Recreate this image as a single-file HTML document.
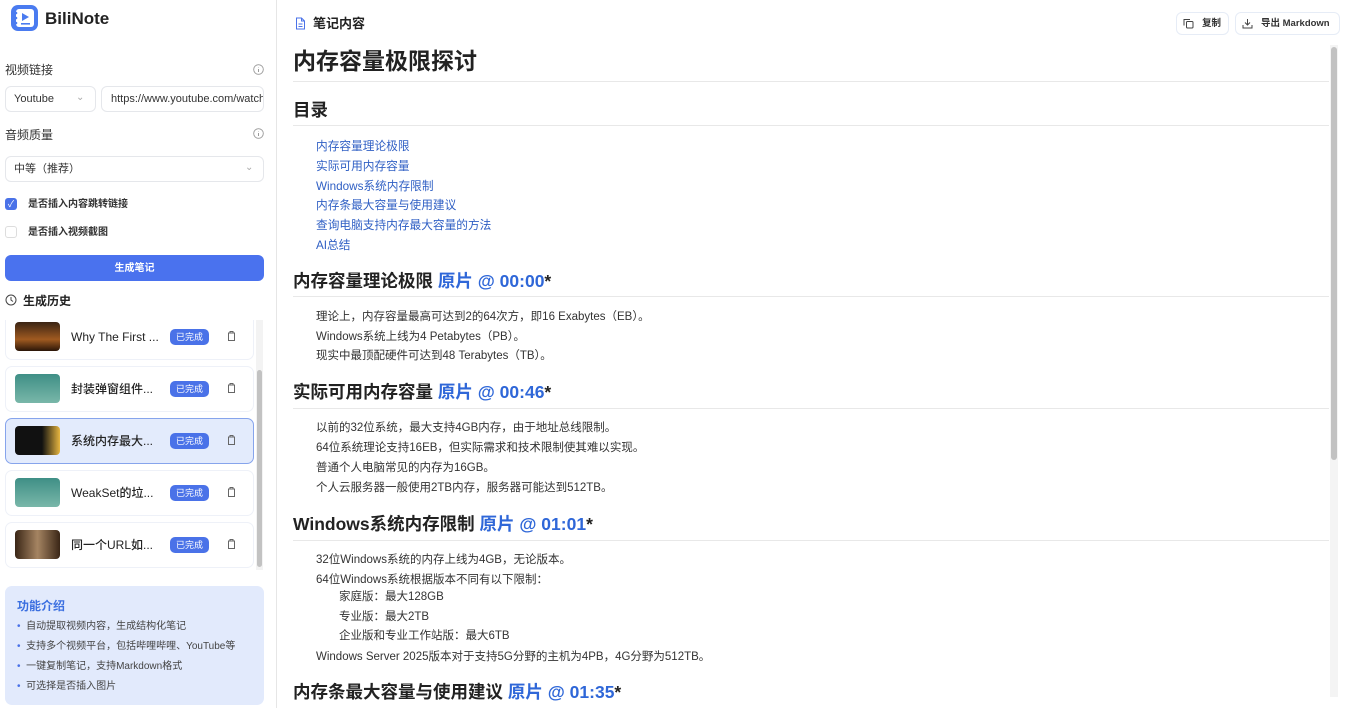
<!DOCTYPE html>
<html><head><meta charset="utf-8"><style>
*{margin:0;padding:0;box-sizing:border-box}
body{width:1351px;height:708px;overflow:hidden;background:#fff;font-family:"Liberation Sans","Noto Sans CJK SC",sans-serif;color:#222;position:relative}
.a{position:absolute;white-space:nowrap;line-height:1}
.box{position:absolute;border:1px solid #e5e7eb;border-radius:6px;background:#fff}
.hl{position:absolute;left:293px;width:1036px;height:1px;background:#e8e8e8}
.p{position:absolute;left:316px;font-size:11.5px;color:#333;white-space:nowrap;line-height:1}
.lk{position:absolute;left:316px;font-size:11.7px;color:#2f5fc4;white-space:nowrap;line-height:1}
.h2{position:absolute;left:293px;font-size:17.5px;font-weight:bold;color:#222;white-space:nowrap;line-height:1}
.h2 span{color:#2f67d8}
.item{position:absolute;left:5px;width:249px;height:46px;border:1px solid #eef1f8;border-radius:7px;background:#fff}
.item .th{position:absolute;left:9px;top:7px;width:45px;height:29px;border-radius:4px}
.item .nm{position:absolute;left:65px;top:16px;font-size:12px;font-weight:500;color:#222;white-space:nowrap;line-height:1}
.item .bd{position:absolute;left:164px;top:14px;width:39px;height:16px;border-radius:5px;background:#4a72e8;color:#fff;font-size:9px;text-align:center;line-height:16px}
.item svg{position:absolute;left:220px;top:15px}
</style></head><body>
<div style="position:absolute;left:276px;top:0;width:1px;height:708px;background:#e6e6e6"></div>
<svg style="position:absolute;left:10px;top:4px" width="29" height="28" viewBox="0 0 29 28"><rect x="1" y="1" width="27" height="26" rx="7" fill="#4a7bf0"/><rect x="6" y="5" width="18" height="18" rx="3" fill="#fff"/><path d="M12 9 L19 13 L12 17Z" fill="#4a7bf0"/><rect x="11" y="19" width="9" height="1.6" fill="#4a7bf0"/><circle cx="6" cy="9" r="1.3" fill="#4a7bf0"/><circle cx="6" cy="14" r="1.3" fill="#4a7bf0"/><circle cx="6" cy="19" r="1.3" fill="#4a7bf0"/></svg>
<div class="a" style="left:45px;top:10px;font-size:17px;font-weight:bold;color:#222">BiliNote</div>
<div class="a" style="left:5px;top:64px;font-size:12px;color:#333">视频链接</div>
<svg style="position:absolute;left:253px;top:64px" width="11" height="11"><circle cx="5.5" cy="5.5" r="4.8" fill="none" stroke="#999" stroke-width="0.9"/><path d="M5.5 5v3M5.5 3.3v.3" stroke="#999"/></svg>
<div class="box" style="left:5px;top:86px;width:91px;height:26px"></div>
<div class="a" style="left:14px;top:94px;font-size:11px;color:#333">Youtube</div>
<div class="a" style="left:76px;top:93px;font-size:10px;color:#aaa">⌄</div>
<div class="box" style="left:101px;top:86px;width:163px;height:26px;overflow:hidden"><div class="a" style="left:9px;top:7px;font-size:11px;color:#333">https://www.youtube.com/watch</div></div>
<div class="a" style="left:5px;top:129px;font-size:12px;color:#333">音频质量</div>
<svg style="position:absolute;left:253px;top:128px" width="11" height="11"><circle cx="5.5" cy="5.5" r="4.8" fill="none" stroke="#999" stroke-width="0.9"/><path d="M5.5 5v3M5.5 3.3v.3" stroke="#999"/></svg>
<div class="box" style="left:5px;top:156px;width:259px;height:26px"></div>
<div class="a" style="left:14px;top:164px;font-size:11px;color:#333">中等（推荐）</div>
<div class="a" style="left:245px;top:163px;font-size:10px;color:#aaa">⌄</div>
<div style="position:absolute;left:5px;top:198px;width:12px;height:12px;border-radius:3px;background:#4a72e8;color:#fff;font-size:9px;text-align:center;line-height:12px">✓</div>
<div class="a" style="left:28px;top:200px;font-size:10px;font-weight:bold;color:#333">是否插入内容跳转链接</div>
<div style="position:absolute;left:5px;top:226px;width:12px;height:12px;border-radius:3px;border:1px solid #ddd"></div>
<div class="a" style="left:28px;top:228px;font-size:10px;font-weight:bold;color:#333">是否插入视频截图</div>
<div style="position:absolute;left:5px;top:255px;width:259px;height:26px;border-radius:6px;background:#4a72ee;color:#fff;font-size:10px;font-weight:bold;text-align:center;line-height:28px">生成笔记</div>
<svg style="position:absolute;left:5px;top:294px" width="12" height="12"><circle cx="6" cy="6" r="5" fill="none" stroke="#444" stroke-width="1"/><path d="M6 3v3l2 1.5" fill="none" stroke="#444"/></svg>
<div class="a" style="left:23px;top:295px;font-size:12px;font-weight:bold;color:#222">生成历史</div>
<div style="position:absolute;left:0;top:320px;width:276px;height:250px;overflow:hidden">
<div class="item" style="top:-6px"><div class="th" style="background:linear-gradient(#3a2414,#a05a20 60%,#2a1508)"></div><div class="nm">Why The First ...</div><div class="bd">已完成</div><svg width="11" height="12"><path d="M2 3h7M4 3V1.5h3V3M2.5 3.5v7h6v-7" fill="none" stroke="#666" stroke-width="1"/></svg></div>
<div class="item" style="top:46px"><div class="th" style="background:linear-gradient(#3f8f86,#79b7a9)"></div><div class="nm">封装弹窗组件...</div><div class="bd">已完成</div><svg width="11" height="12"><path d="M2 3h7M4 3V1.5h3V3M2.5 3.5v7h6v-7" fill="none" stroke="#666" stroke-width="1"/></svg></div>
<div class="item" style="top:98px;background:#e3ebfc;border-color:#86a4ec"><div class="th" style="background:linear-gradient(90deg,#111 60%,#e7b640)"></div><div class="nm">系统内存最大...</div><div class="bd">已完成</div><svg width="11" height="12"><path d="M2 3h7M4 3V1.5h3V3M2.5 3.5v7h6v-7" fill="none" stroke="#666" stroke-width="1"/></svg></div>
<div class="item" style="top:150px"><div class="th" style="background:linear-gradient(#3f8f86,#79b7a9)"></div><div class="nm">WeakSet的垃...</div><div class="bd">已完成</div><svg width="11" height="12"><path d="M2 3h7M4 3V1.5h3V3M2.5 3.5v7h6v-7" fill="none" stroke="#666" stroke-width="1"/></svg></div>
<div class="item" style="top:202px"><div class="th" style="background:linear-gradient(90deg,#3a2616,#a58462,#3a2616)"></div><div class="nm">同一个URL如...</div><div class="bd">已完成</div><svg width="11" height="12"><path d="M2 3h7M4 3V1.5h3V3M2.5 3.5v7h6v-7" fill="none" stroke="#666" stroke-width="1"/></svg></div>
<div style="position:absolute;left:256px;top:0;width:7px;height:250px;background:#f3f3f3"></div>
<div style="position:absolute;left:257px;top:50px;width:5px;height:197px;border-radius:3px;background:#c2c2c2"></div>
</div>
<div style="position:absolute;left:5px;top:586px;width:259px;height:119px;border-radius:7px;background:#e2eafc"></div>
<div class="a" style="left:17px;top:600px;font-size:12px;font-weight:bold;color:#3b6fe0">功能介绍</div>
<div class="a" style="left:17px;top:622px;font-size:10px;color:#444"><span style="color:#4a72e8">•</span>&nbsp; 自动提取视频内容，生成结构化笔记</div>
<div class="a" style="left:17px;top:642px;font-size:10px;color:#444"><span style="color:#4a72e8">•</span>&nbsp; 支持多个视频平台，包括哔哩哔哩、YouTube等</div>
<div class="a" style="left:17px;top:662px;font-size:10px;color:#444"><span style="color:#4a72e8">•</span>&nbsp; 一键复制笔记，支持Markdown格式</div>
<div class="a" style="left:17px;top:682px;font-size:10px;color:#444"><span style="color:#4a72e8">•</span>&nbsp; 可选择是否插入图片</div>
<svg style="position:absolute;left:295px;top:17px" width="11" height="13"><path d="M1.5 1h5l3 3v8h-8z M6.5 1v3h3 M3.5 7h4M3.5 9.5h4" fill="none" stroke="#4a72e8" stroke-width="1"/></svg>
<div class="a" style="left:313px;top:17px;font-size:13px;font-weight:bold;color:#222">笔记内容</div>
<div class="box" style="left:1176px;top:12px;width:53px;height:23px;border-color:#e6ecf6"></div>
<svg style="position:absolute;left:1183px;top:18px" width="11" height="11"><rect x="3.5" y="3.5" width="6.5" height="6.5" rx="1" fill="none" stroke="#444"/><path d="M1 7.5V1.5h6" fill="none" stroke="#444"/></svg>
<div class="a" style="left:1202px;top:19px;font-size:9.5px;font-weight:bold;color:#333">复制</div>
<div class="box" style="left:1235px;top:12px;width:105px;height:23px;border-color:#e6ecf6"></div>
<svg style="position:absolute;left:1242px;top:18px" width="11" height="11"><path d="M5.5 1v6M3 4.5l2.5 2.5L8 4.5M1 7v3h9V7" fill="none" stroke="#444"/></svg>
<div class="a" style="left:1261px;top:19px;font-size:9.5px;font-weight:bold;color:#333">导出 Markdown</div>
<div style="position:absolute;left:1330px;top:45px;width:8px;height:652px;background:#f4f4f4"></div>
<div style="position:absolute;left:1331px;top:47px;width:6px;height:413px;border-radius:3px;background:#c2c2c2"></div>
<div class="a" style="left:293px;top:50px;font-size:23px;font-weight:bold;color:#222">内存容量极限探讨</div>
<div class="hl" style="top:81px"></div>
<div class="h2" style="top:102px">目录</div>
<div class="hl" style="top:125px"></div>
<div class="lk" style="top:141px">内存容量理论极限</div>
<div class="lk" style="top:161px">实际可用内存容量</div>
<div class="lk" style="top:181px">Windows系统内存限制</div>
<div class="lk" style="top:200px">内存条最大容量与使用建议</div>
<div class="lk" style="top:220px">查询电脑支持内存最大容量的方法</div>
<div class="lk" style="top:240px">AI总结</div>
<div class="h2" style="top:273px">内存容量理论极限 <span>原片 @ 00:00</span>*</div>
<div class="hl" style="top:296px"></div>
<div class="p" style="top:312px">理论上，内存容量最高可达到2的64次方，即16 Exabytes（EB）。</div>
<div class="p" style="top:332px">Windows系统上线为4 Petabytes（PB）。</div>
<div class="p" style="top:351px">现实中最顶配硬件可达到48 Terabytes（TB）。</div>
<div class="h2" style="top:384px">实际可用内存容量 <span>原片 @ 00:46</span>*</div>
<div class="hl" style="top:408px"></div>
<div class="p" style="top:423px">以前的32位系统，最大支持4GB内存，由于地址总线限制。</div>
<div class="p" style="top:443px">64位系统理论支持16EB，但实际需求和技术限制使其难以实现。</div>
<div class="p" style="top:463px">普通个人电脑常见的内存为16GB。</div>
<div class="p" style="top:483px">个人云服务器一般使用2TB内存，服务器可能达到512TB。</div>
<div class="h2" style="top:516px">Windows系统内存限制 <span>原片 @ 01:01</span>*</div>
<div class="hl" style="top:540px"></div>
<div class="p" style="top:555px">32位Windows系统的内存上线为4GB，无论版本。</div>
<div class="p" style="top:575px">64位Windows系统根据版本不同有以下限制：</div>
<div class="p" style="top:592px;left:339px">家庭版：最大128GB</div>
<div class="p" style="top:612px;left:339px">专业版：最大2TB</div>
<div class="p" style="top:631px;left:339px">企业版和专业工作站版：最大6TB</div>
<div class="p" style="top:652px">Windows Server 2025版本对于支持5G分野的主机为4PB，4G分野为512TB。</div>
<div class="h2" style="top:684px">内存条最大容量与使用建议 <span>原片 @ 01:35</span>*</div>
</body></html>
